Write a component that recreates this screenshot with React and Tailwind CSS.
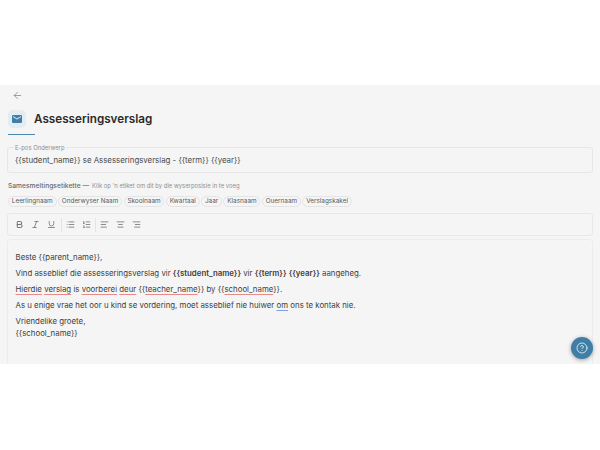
import React from "react";
import { ArrowLeft, Bold, Italic, Underline, List, ListOrdered, AlignLeft, AlignCenter, AlignRight, CircleHelp } from "lucide-react";

const chips = ["Leerlingnaam", "Onderwyser Naam", "Skoolnaam", "Kwartaal", "Jaar", "Klasnaam", "Ouernaam", "Verslagskakel"];
const spell = "underline decoration-[#e88a88] decoration-1 underline-offset-[1.5px]";

export default function App() {
  return (
    <div className="w-[600px] h-[450px] bg-white overflow-hidden relative text-[#333]" style={{ fontFamily: "Inter, 'Liberation Sans', sans-serif" }}>
      <div className="h-[85px]" />
      <div className="h-[279px] bg-[#f5f5f5] overflow-hidden px-[7px] relative">
        <div className="pl-[4.5px] h-[20px] flex items-center">
          <ArrowLeft size={11} strokeWidth={1.5} className="text-[#777]" />
        </div>
        <div className="flex items-center gap-2 mt-[5px] h-[18px] ml-[1px]">
          <div className="w-[18px] h-[18px] rounded-[5px] bg-[#e3ecf2] flex items-center justify-center">
            <svg width="10" height="8" viewBox="0 0 20 16"><path fill="#3f7ea6" d="M2 0h16a2 2 0 0 1 2 2v12a2 2 0 0 1-2 2H2a2 2 0 0 1-2-2V2a2 2 0 0 1 2-2zm8 9l8-5V2l-8 5-8-5v2z" /></svg>
          </div>
          <h1 className="text-[11.7px] leading-[18px] font-semibold text-[#2a2a2a]">Assesseringsverslag</h1>
        </div>
        <div className="w-[27px] h-[1px] bg-[#4a8ab0] mt-[6px] ml-[1px]" />
        <fieldset className="mt-[10px] h-[28px] border border-[#e6e6e6] rounded-[3px] px-[5px]">
          <legend className="text-[5.9px] leading-[5px] text-[#8f8f8f] px-[1px] ml-[1px]">E-pos Onderwerp</legend>
          <div className="text-[7.85px] leading-[12px] mt-[4px] pl-[2px] text-[#4a4a4a]">{"{{student_name}} se Assesseringsverslag - {{term}} {{year}}"}</div>
        </fieldset>
        <div className="mt-[7px] flex items-center h-[12px] gap-[3px] ml-[1px]">
          <span className="text-[6.7px] font-medium text-[#6a6a6a]">Samesmeltingsetikette —</span>
          <span className="text-[5.9px] text-[#8f8f8f]">Klik op 'n etiket om dit by die wyserposisie in te voeg</span>
        </div>
        <div className="flex gap-[1.5px] mt-[4px] h-[11px] ml-[1px]">
          {chips.map((c) => (
            <span key={c} className="h-[11px] px-[2.8px] flex items-center rounded-full border border-[#e4e4e4] text-[6.4px] text-[#5a5a5a] whitespace-nowrap">{c}</span>
          ))}
        </div>
        <div className="mt-[6px] h-[23px] border border-[#e8e8e8] rounded-[3px] flex items-center pl-[7px] text-[#6a6a6a]">
          <div className="flex items-center gap-[7px] pr-[5px] border-r border-[#e4e4e4] h-[14px]">
            <Bold size={9} strokeWidth={2.5} />
            <Italic size={9} />
            <Underline size={9} />
          </div>
          <div className="flex items-center gap-[7px] px-[4px] border-r border-[#e4e4e4] h-[14px]">
            <List size={9} />
            <ListOrdered size={9} />
          </div>
          <div className="flex items-center gap-[7px] pl-[4px]">
            <AlignLeft size={9} />
            <AlignCenter size={9} />
            <AlignRight size={9} />
          </div>
        </div>
        <div className="mt-[3px] h-[130px] border border-[#ececec] rounded-[3px] px-[7.5px] pt-[11px] text-[7.85px] leading-[12px] text-[#404040]">
          <p className="mb-[4px]">{"Beste {{parent_name}},"}</p>
          <p className="mb-[4px]">Vind asseblief die assesseringsverslag vir <b className="font-semibold">{"{{student_name}}"}</b> vir <b className="font-semibold">{"{{term}}"}</b> <b className="font-semibold">{"{{year}}"}</b> aangeheg.</p>
          <p className="mb-[4px]"><span className={spell}>Hierdie</span> <span className={spell}>verslag</span> is <span className={spell}>voorberei</span> <span className={spell}>deur</span> {"{{"}<span className={spell}>teacher_name</span>{"}}"} by {"{{"}<span className={spell}>school_name</span>{"}}"}.</p>
          <p className="mb-[4px]">As u enige vrae het oor u kind se vordering, moet asseblief nie huiwer <span className="underline decoration-[#7fa3de] decoration-1 underline-offset-[1.5px]">om</span> ons te kontak nie.</p>
          <p>Vriendelike groete,<br />{"{{school_name}}"}</p>
        </div>
      </div>
      <button className="absolute left-[571px] top-[337px] w-[22px] h-[22px] rounded-full bg-[#3f7ea6] flex items-center justify-center shadow-[0_1px_4px_rgba(0,0,0,0.35)]">
        <CircleHelp size={12} strokeWidth={1.5} className="text-white" />
      </button>
    </div>
  );
}
